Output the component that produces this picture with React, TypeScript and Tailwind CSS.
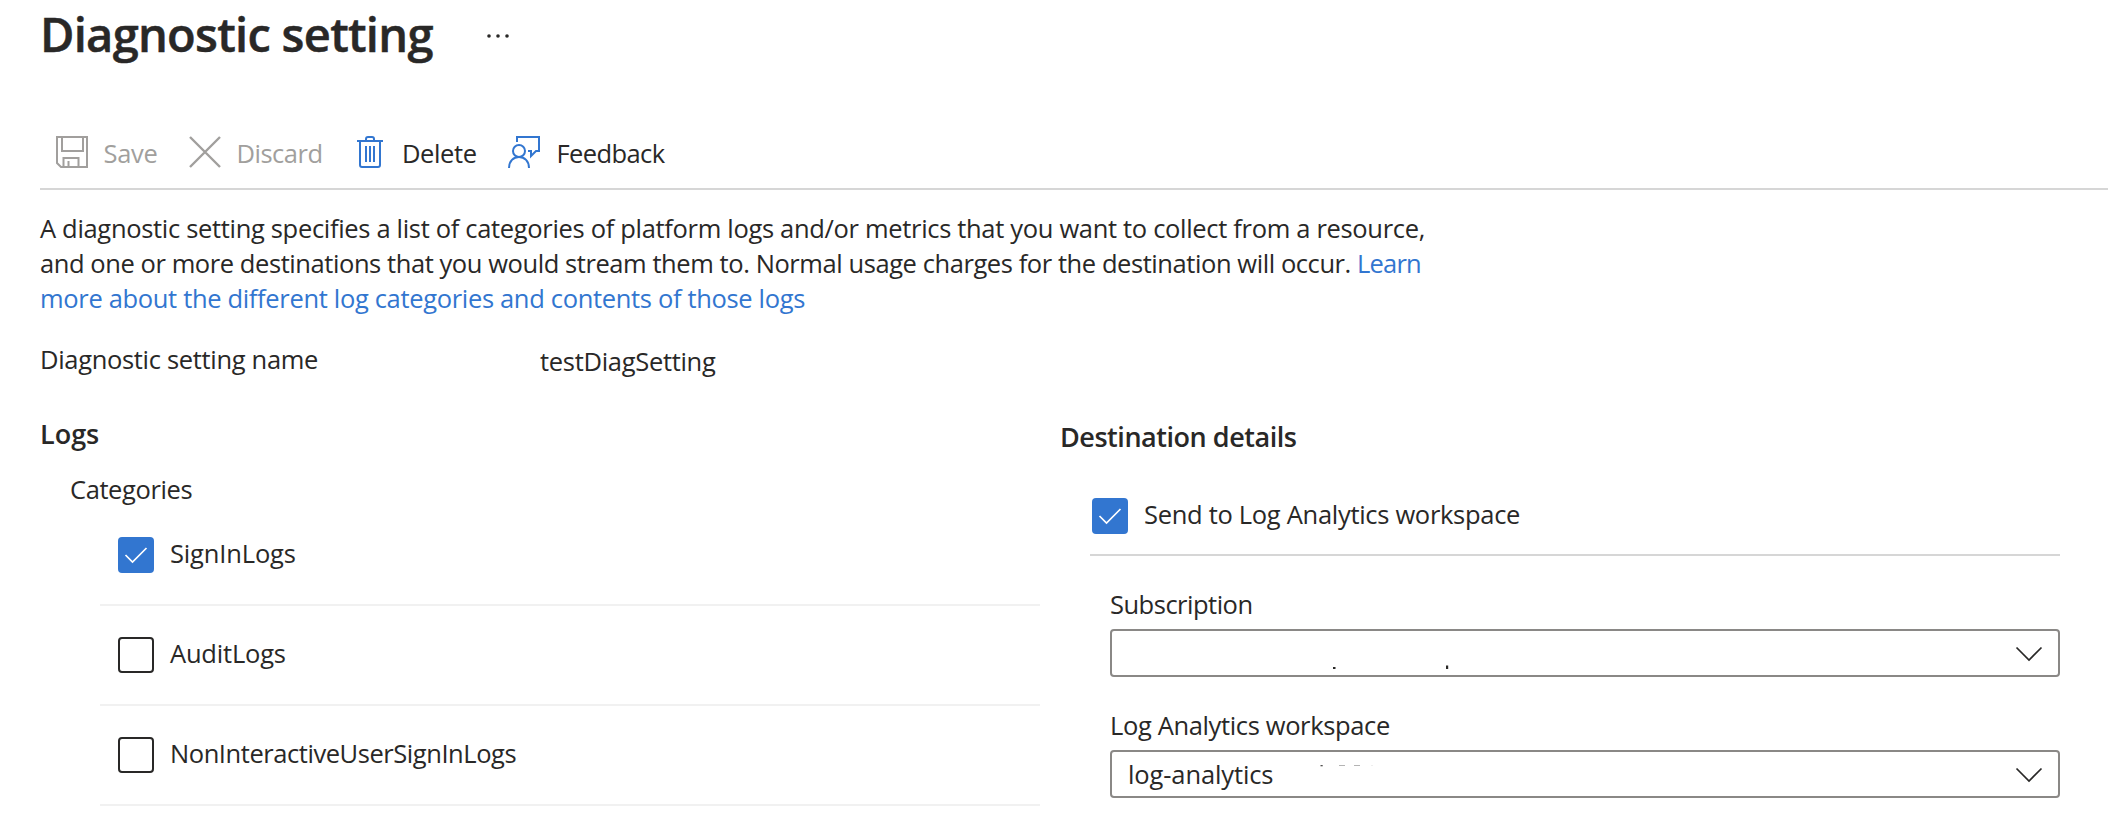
import React from "react";

function SaveIcon() {
  return (
    <svg width="32" height="32" viewBox="0 0 32 32" fill="none" stroke="#a19f9d" strokeWidth="2">
      <path d="M1 1H31V31H5L1 27V1Z" />
      <path d="M6 1V15H27V1" />
      <path d="M7.500 31V22H22.500V31" />
      <path d="M12.500 25V31" />
    </svg>
  );
}

function DiscardIcon() {
  return (
    <svg width="32" height="32" viewBox="0 0 32 32" fill="none" stroke="#a19f9d" strokeWidth="2.400">
      <path d="M1 1L31 31M31 1L1 31" />
    </svg>
  );
}

function DeleteIcon() {
  return (
    <svg width="32" height="32" viewBox="0 0 32 32" fill="none" stroke="#3276d0" strokeWidth="2">
      <path d="M3 5H29" />
      <path d="M12 5V3Q12 1 14 1H18Q20 1 20 3V5" />
      <path d="M6 5V29Q6 31 8 31H24Q26 31 26 29V5" />
      <path d="M12 10V26M16 10V26M20 10V26" />
    </svg>
  );
}

function FeedbackIcon() {
  return (
    <svg width="32" height="32" viewBox="0 0 32 32" fill="none" stroke="#3276d0" strokeWidth="2">
      <circle cx="11" cy="15" r="6" />
      <path d="M1 32C1 25 5.500 21 11 21C16.500 21 21 25 21 32" />
      <path d="M9 6V1H31V15H28L23 20V15H20" />
    </svg>
  );
}

function Checkbox({ checked }: { checked?: boolean }) {
  if (!checked) {
    return <span className="size-9 shrink-0 rounded-[4px] border-2 border-[#292827] bg-white" />;
  }
  return (
    <span className="flex size-9 shrink-0 items-center justify-center rounded-[4px] bg-[#3276d0]">
      <svg width="36" height="36" viewBox="0 0 36 36" fill="none" stroke="#ffffff" strokeWidth="1.700">
        <path d="M7.500 18L14.500 25L28.500 11" />
      </svg>
    </span>
  );
}

function LogRow({ label, checked, tracking }: { label: string; checked?: boolean; tracking: string }) {
  return (
    <li className="flex h-[100px] items-start border-b-2 border-[#f1f1f1] pt-[31px] pl-[18px]">
      <Checkbox checked={checked} />
      <span className={"-mt-px ml-4 " + tracking}>{label}</span>
    </li>
  );
}

function Chevron() {
  return (
    <svg className="mt-[15px] ml-auto" width="28" height="18" viewBox="0 0 28 18" fill="none" stroke="#292827" strokeWidth="1.700">
      <path d="M1.500 1.500L14 14L26.500 1.500" />
    </svg>
  );
}

export default function App() {
  return (
    <main className="h-[824px] w-[2108px] overflow-hidden bg-white font-['Open_Sans','Noto_Sans',sans-serif] text-[25.5px] leading-[35px] whitespace-nowrap text-[#292827]">
      <header className="flex h-[136px] items-start pt-[2px] pl-10">
        <h1 className="w-[446px] text-[47px] leading-[64px] font-semibold tracking-[-0.72px] [-webkit-text-stroke:0.5px_#292827]">Diagnostic setting</h1>
        <svg className="mt-[30px]" width="24" height="8" viewBox="0 0 24 8" fill="#292827">
          <circle cx="3" cy="4" r="1.800" />
          <circle cx="12" cy="4" r="1.800" />
          <circle cx="21" cy="4" r="1.800" />
        </svg>
      </header>

      <nav className="ml-10 flex h-[54px] items-start border-b-2 border-[#d6d6d6] pl-4">
        <div className="flex w-[133px] gap-[15.5px] text-[#a19f9d]">
          <SaveIcon />
          <span className="tracking-[-0.3px]">Save</span>
        </div>
        <div className="flex w-[165px] gap-[15.5px] text-[#a19f9d]">
          <DiscardIcon />
          <span className="tracking-[-0.5px]">Discard</span>
        </div>
        <div className="flex w-[154px] gap-4">
          <DeleteIcon />
          <span className="tracking-[-0.4px]">Delete</span>
        </div>
        <div className="flex gap-[16.5px]">
          <FeedbackIcon />
          <span className="tracking-[-0.6px]">Feedback</span>
        </div>
      </nav>

      <p className="mt-[21px] ml-10">
        <span className="block tracking-[-0.32px]">
          A diagnostic setting specifies a list of categories of platform logs and/or metrics that you want to collect from a resource,
        </span>
        <span className="block tracking-[-0.425px]">
          and one or more destinations that you would stream them to. Normal usage charges for the destination will occur.{" "}
          <a className="tracking-[-0.8px] text-[#3276d0]">Learn</a>
        </span>
        <a className="block tracking-[-0.33px] text-[#3276d0]">more about the different log categories and contents of those logs</a>
      </p>

      <div className="mt-[26px] ml-10 flex h-[37px] items-start">
        <span className="w-[500px] tracking-[-0.32px]">Diagnostic setting name</span>
        <span className="mt-[2px] tracking-[-0.3px]">testDiagSetting</span>
      </div>

      <div className="mt-[37px] ml-10 flex items-start">
        <section className="w-[1000px]">
          <h2 className="text-[27px] leading-[36px] font-semibold">Logs</h2>
          <h3 className="mt-5 h-[34px] pl-[30px] tracking-[-0.4px]">Categories</h3>
          <ul className="ml-[60px]">
            <LogRow label="SignInLogs" checked tracking="tracking-[-0.15px]" />
            <LogRow label="AuditLogs" tracking="tracking-[-0.2px]" />
            <LogRow label="NonInteractiveUserSignInLogs" tracking="tracking-[-0.44px]" />
          </ul>
        </section>

        <section className="ml-5 w-[1000px] pt-[3px]">
          <h2 className="text-[27px] leading-[36px] font-semibold tracking-[-0.46px]">Destination details</h2>
          <div className="mt-[42px] ml-[30px] flex h-[59px] items-start border-b-2 border-[#d6d6d6] pl-[2px]">
            <span className="mt-px flex">
              <Checkbox checked />
            </span>
            <span className="ml-4 tracking-[-0.3px]">Send to Log Analytics workspace</span>
          </div>

          <div className="mt-[31px] ml-[50px]">
            <label className="block h-[42px] tracking-[-0.5px]">Subscription</label>
            <div className="flex h-12 rounded-[4px] border-2 border-[#8a8886] pr-[15px]">
              <svg className="ml-[218px]" width="150" height="44" viewBox="0 0 150 44" fill="#292827">
                <rect x="3" y="36" width="2.500" height="2" />
                <rect x="116" y="34.500" width="2.200" height="3.500" />
              </svg>
              <Chevron />
            </div>
          </div>

          <div className="mt-[31px] ml-[50px]">
            <label className="block h-[42px] tracking-[-0.36px]">Log Analytics workspace</label>
            <div className="flex h-12 rounded-[4px] border-2 border-[#8a8886] pr-[15px]">
              <span className="mt-[5px] ml-4 w-36 tracking-[-0.12px]">log-analytics</span>
              <svg className="ml-[40px]" width="70" height="44" viewBox="0 0 70 44" fill="#292827">
                <rect x="8.500" y="13" width="2.200" height="1.300" opacity="0.8" />
                <rect x="27" y="13" width="6" height="1" opacity="0.35" />
                <rect x="42" y="13" width="6" height="1" opacity="0.35" />
                <rect x="59" y="13" width="2" height="1" opacity="0.08" />
              </svg>
              <Chevron />
            </div>
          </div>
        </section>
      </div>
    </main>
  );
}
